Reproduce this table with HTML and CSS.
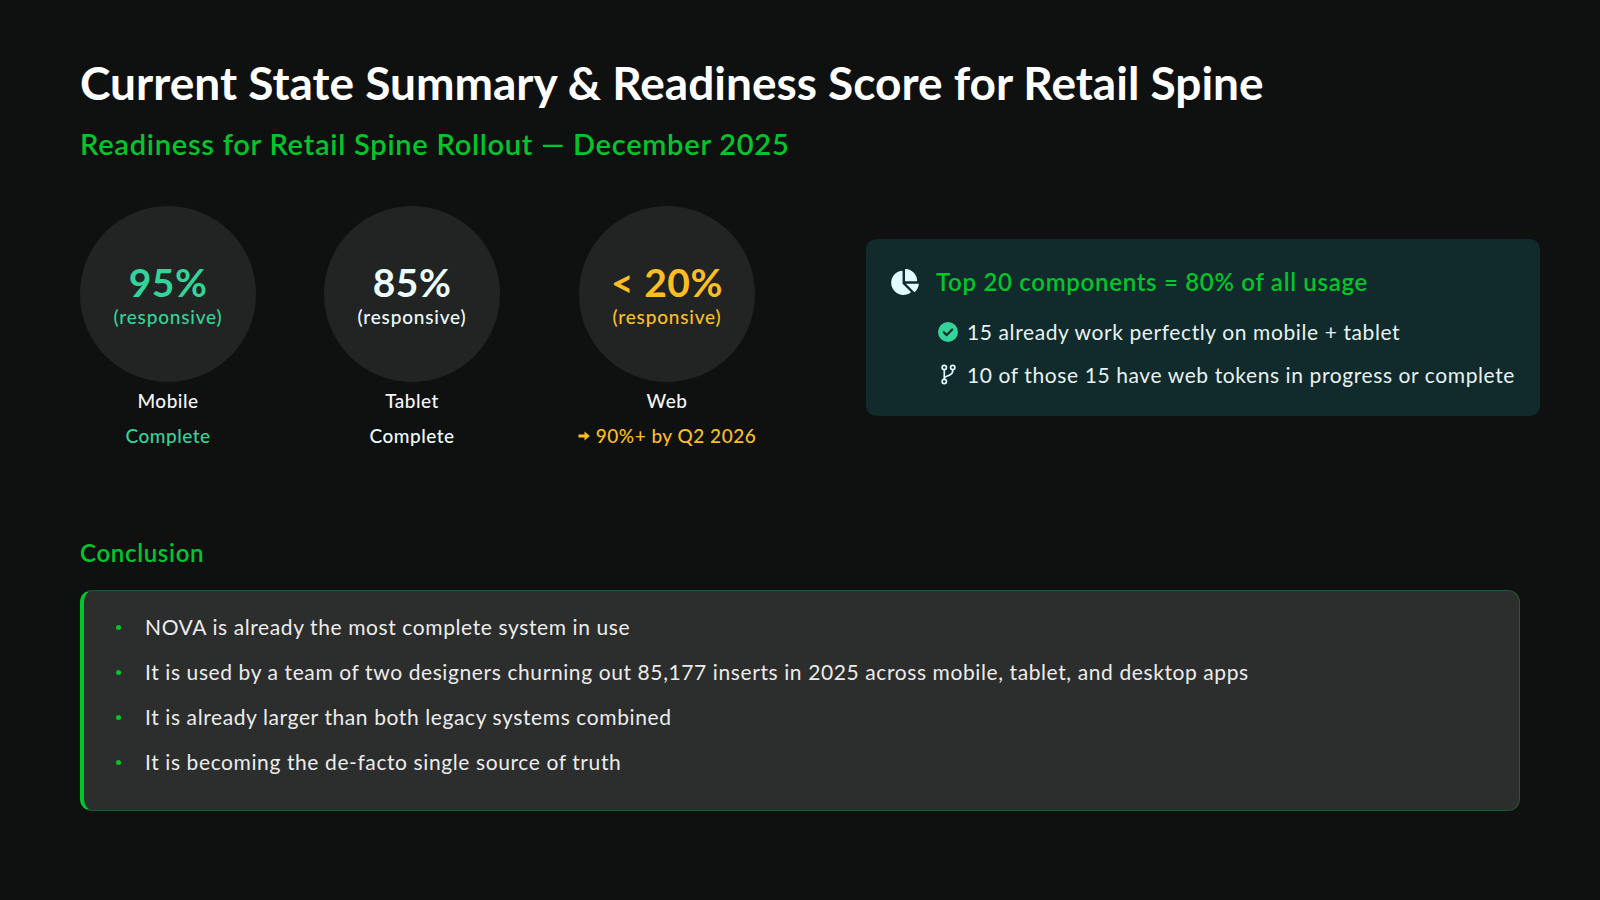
FILE: index.html
```html
<!DOCTYPE html>
<html lang="en">
<head>
<meta charset="utf-8">
<title>Current State Summary &amp; Readiness Score for Retail Spine</title>
<link rel="stylesheet" href="styles.css">
</head>
<body>
<div class="slide">
  <h1 class="title">Current State Summary &amp; Readiness Score for Retail Spine</h1>
  <h2 class="subtitle">Readiness for Retail Spine Rollout — December 2025</h2>

  <section class="top">
    <div class="metrics">
      <div class="metric metric--mobile">
        <div class="ring">
          <span class="pct">95%</span>
          <span class="note">(responsive)</span>
        </div>
        <div class="label">Mobile</div>
        <div class="status">Complete</div>
      </div>
      <div class="metric metric--tablet">
        <div class="ring">
          <span class="pct">85%</span>
          <span class="note">(responsive)</span>
        </div>
        <div class="label">Tablet</div>
        <div class="status">Complete</div>
      </div>
      <div class="metric metric--web">
        <div class="ring">
          <span class="pct">&lt; 20%</span>
          <span class="note">(responsive)</span>
        </div>
        <div class="label">Web</div>
        <div class="status"><svg class="arrow" viewBox="0 0 12 10" width="12" height="10"><path d="M0.5 3.4h6V0.6L11.8 5l-5.3 4.4V6.6h-6z" fill="currentColor"/></svg>90%+ by Q2 2026</div>
      </div>
    </div>

    <div class="card">
      <div class="card-head">
        <svg class="pie" viewBox="0 0 544 512" width="28" height="26"><path fill="currentColor" d="M527.79 288H290.5l158.03 158.03c6.04 6.04 15.98 6.53 22.19.68 38.7-36.46 65.32-85.61 73.13-140.86 1.34-9.46-6.51-17.85-16.060-17.85zM511.96 223.2C503.72 103.74 408.26 8.28 288.8.04 279.68-.59 272 7.1 272 16.24V240h223.77c9.14 0 16.82-7.68 16.19-16.8zM224 288V50.71c0-9.55-8.39-17.4-17.84-16.06C86.99 51.49-4.1 155.6.14 280.37 4.5 408.51 114.83 513.59 243.03 511.98c50.4-.63 96.97-16.87 135.26-44.03 7.9-5.6 8.42-17.23 1.57-24.08L224 288z"/></svg>
        <span class="card-title">Top 20 components = 80% of all usage</span>
      </div>
      <ul class="card-list">
        <li>
          <span class="ico"><svg viewBox="0 0 20 20" width="20" height="20"><circle cx="10" cy="10" r="10" fill="#34d399"/><path d="M5.8 10.2l2.9 2.9 5.5-5.6" fill="none" stroke="#0f2a2b" stroke-width="2.2" stroke-linecap="round" stroke-linejoin="round"/></svg></span>
          <span>15 already work perfectly on mobile + tablet</span>
        </li>
        <li>
          <span class="ico"><svg viewBox="0 0 16 22" width="15" height="21"><g fill="none" stroke="#e0fbff" stroke-width="1.8"><circle cx="3.5" cy="3.5" r="2.3"/><circle cx="3.5" cy="18.5" r="2.3"/><circle cx="12.5" cy="3.5" r="2.3"/><path d="M3.5 5.8v10.4"/><path d="M12.5 5.8v1.5c0 3.2-3 4.6-6.4 5.6-1.5.5-2.6 1.3-2.6 2.8"/></g></svg></span>
          <span>10 of those 15 have web tokens in progress or complete</span>
        </li>
      </ul>
    </div>
  </section>

  <h3 class="section-title">Conclusion</h3>
  <div class="conclusion">
    <ul class="points">
      <li>NOVA is already the most complete system in use</li>
      <li>It is used by a team of two designers churning out 85,177 inserts in 2025 across mobile, tablet, and desktop apps</li>
      <li>It is already larger than both legacy systems combined</li>
      <li>It is becoming the de-facto single source of truth</li>
    </ul>
  </div>
</div>
</body>
</html>
```

FILE: styles.css
```css
* { box-sizing: border-box; }

html, body {
  margin: 0;
  padding: 0;
  background: #0f1111;
}

body {
  font-family: "Lato", "Liberation Sans", sans-serif;
  color: #f2f4f4;
  width: 1600px;
  height: 900px;
  overflow: hidden;
}

.slide {
  padding: 54px 80px 0 80px;
}

.title {
  margin: 0;
  font-size: 46px;
  line-height: 58px;
  font-weight: 700;
  color: #ffffff;
}

.subtitle {
  margin: 15px 0 0 0;
  font-size: 29px;
  line-height: 34px;
  font-weight: 600;
  letter-spacing: 0.75px;
  color: #00c62b;
}

.top {
  margin-top: 45px;
  display: flex;
  align-items: center;
}

.metrics {
  display: flex;
  align-items: flex-start;
  gap: 68px;
  flex: none;
}

.metric {
  display: flex;
  flex-direction: column;
  align-items: center;
  width: 176px;
}

.metric--web {
  margin-left: 11px;
}

.ring {
  width: 176px;
  height: 176px;
  border-radius: 50%;
  background: #222424;
  display: flex;
  flex-direction: column;
  align-items: center;
  justify-content: center;
}

.pct {
  font-size: 39px;
  line-height: 46px;
  font-weight: 700;
  letter-spacing: 0.5px;
}

.note {
  font-size: 19px;
  line-height: 24px;
  font-weight: 500;
  letter-spacing: 0.8px;
  margin-bottom: 1px;
}

.label {
  margin-top: 7px;
  font-size: 19px;
  line-height: 24px;
  font-weight: 500;
  letter-spacing: 0.5px;
  color: #f4f6f6;
}

.status {
  margin-top: 11px;
  font-size: 19px;
  line-height: 24px;
  font-weight: 500;
  letter-spacing: 0.5px;
  white-space: nowrap;
  display: flex;
  align-items: center;
  gap: 6px;
}

.metric--mobile .pct,
.metric--mobile .note,
.metric--mobile .status { color: #34d399; }

.metric--tablet .pct,
.metric--tablet .note,
.metric--tablet .status { color: #ecfeff; }

.metric--web .pct,
.metric--web .note,
.metric--web .status { color: #fbbf24; }

.arrow { display: block; }

.card {
  margin-left: 111px;
  width: 674px;
  flex: none;
  background: #112a2b;
  border-radius: 10px;
  padding: 27px 24px 27px 25px;
}

.card-head {
  display: flex;
  align-items: center;
  gap: 17px;
  height: 32px;
}

.pie {
  color: #e0fbff;
  display: block;
  flex: none;
}

.card-title {
  font-size: 24px;
  line-height: 32px;
  font-weight: 600;
  letter-spacing: 0.7px;
  color: #00c62b;
}

.card-list {
  list-style: none;
  margin: 20px 0 0 47px;
  padding: 0;
  display: flex;
  flex-direction: column;
  gap: 15px;
}

.card-list li {
  display: flex;
  align-items: center;
  gap: 9px;
  font-size: 21px;
  line-height: 28px;
  letter-spacing: 0.6px;
  color: #e8f2f2;
}

.ico {
  width: 20px;
  height: 28px;
  display: flex;
  align-items: center;
  justify-content: center;
  flex: none;
}

.ico svg { display: block; }

.section-title {
  margin: 89px 0 0 0;
  font-size: 24px;
  line-height: 32px;
  font-weight: 600;
  letter-spacing: 0.7px;
  color: #00c62b;
}

.conclusion {
  margin-top: 21px;
  width: 1440px;
  background: #2c2e2e;
  border: 1px solid rgba(0, 198, 43, 0.28);
  border-left: 4px solid #00c62b;
  border-radius: 12px;
  padding: 22px 32px 17px 32px;
}

.points {
  list-style: none;
  margin: 0;
  padding: 0;
}

.points li {
  display: flex;
  align-items: center;
  gap: 24px;
  font-size: 21px;
  line-height: 28px;
  letter-spacing: 0.6px;
  color: #ececec;
  margin-bottom: 17px;
}

.points li::before {
  content: "";
  width: 5px;
  height: 5px;
  border-radius: 50%;
  background: #00c62b;
  flex: none;
}
```
